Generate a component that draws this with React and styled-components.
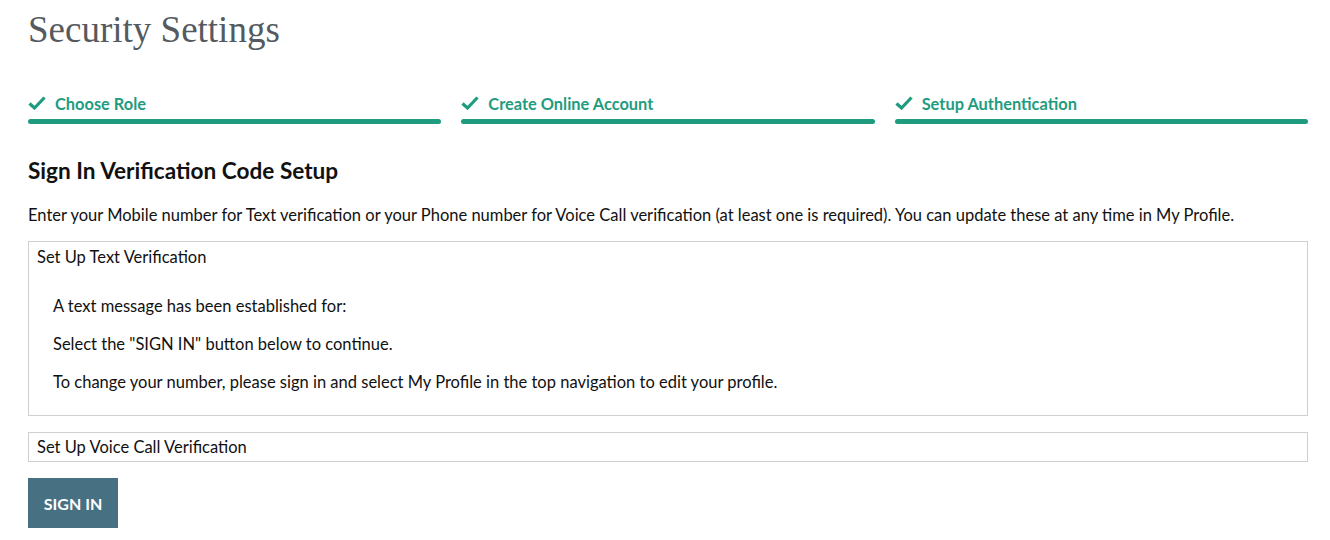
import styled, { createGlobalStyle } from "styled-components";

/* =======================
   Global
======================= */

const GlobalStyle = createGlobalStyle`
  body {
    margin: 0;
    background: #ffffff;
    font-family: "Lato", "Noto Sans", sans-serif;
    color: #111111;
  }
`;

const Page = styled.main`
  padding: 6px 22px 0 28px;
  display: flex;
  flex-direction: column;
`;

const Title = styled.h1`
  margin: 0;
  font-family: "Liberation Serif", "DejaVu Serif", serif;
  font-weight: 400;
  font-size: 37px;
  line-height: 48px;
  color: #545a60;
`;

/* =======================
   Stepper
======================= */

const Steps = styled.ol`
  list-style: none;
  margin: 39px 0 0;
  padding: 0;
  display: grid;
  grid-template-columns: repeat(3, 1fr);
  gap: 20px;
`;

const Step = styled.li`
  display: flex;
  flex-direction: column;
  gap: 6px;
`;

const StepLabel = styled.div`
  display: flex;
  align-items: center;
  gap: 9px;
  font-size: 16.4px;
  font-weight: 700;
  color: #1f9c7f;
  height: 20px;
`;

const StepBar = styled.div`
  height: 5px;
  border-radius: 3px;
  background: ${(p) => (p.$done ? "#1f9c7f" : "#d5d5d5")};
`;

const Check = () => (
  <svg width="18" height="14" viewBox="0 0 18 14" aria-hidden="true">
    <path d="M1.5 7.5 L6.5 12 L16.5 1.5" fill="none" stroke="#1f9c7f" strokeWidth="3.2" strokeLinejoin="miter" />
  </svg>
);

/* =======================
   Content
======================= */

const Heading = styled.h2`
  margin: 33px 0 0;
  font-size: 22.6px;
  font-weight: 700;
  line-height: 28px;
  color: #111111;
`;

const Intro = styled.p`
  margin: 20px 0 0;
  font-size: 16.5px;
  line-height: 20px;
`;

const Panel = styled.section`
  margin-top: ${(p) => p.$gap || 0}px;
  border: 1px solid #cfcfcf;
  padding: ${(p) => (p.$open ? "5px 8px 23px" : "4px 8px 4px")};
`;

const PanelTitle = styled.div`
  font-size: 16.5px;
  line-height: 20px;
`;

const PanelBody = styled.div`
  padding: 29px 0 0 16px;
  display: flex;
  flex-direction: column;
  gap: 18px;
`;

const Line = styled.p`
  margin: 0;
  font-size: 16.5px;
  line-height: 20px;
`;

const Button = styled.button`
  margin-top: 16px;
  align-self: flex-start;
  width: 90px;
  height: 50px;
  border: none;
  background: #477183;
  color: #ffffff;
  font-family: inherit;
  font-size: 16px;
  font-weight: 700;
  cursor: pointer;
`;

const steps = ["Choose Role", "Create Online Account", "Setup Authentication"];

export default function App() {
  return (
    <>
      <GlobalStyle />
      <Page>
        <Title>Security Settings</Title>

        <Steps>
          {steps.map((s) => (
            <Step key={s}>
              <StepLabel>
                <Check />
                {s}
              </StepLabel>
              <StepBar $done />
            </Step>
          ))}
        </Steps>

        <Heading>Sign In Verification Code Setup</Heading>
        <Intro>
          Enter your Mobile number for Text verification or your Phone number for Voice Call verification (at least one is required). You can update these at any time in My Profile.
        </Intro>

        <Panel $gap={16} $open>
          <PanelTitle>Set Up Text Verification</PanelTitle>
          <PanelBody>
            <Line>A text message has been established for:</Line>
            <Line>Select the "SIGN IN" button below to continue.</Line>
            <Line>To change your number, please sign in and select My Profile in the top navigation to edit your profile.</Line>
          </PanelBody>
        </Panel>

        <Panel $gap={16}>
          <PanelTitle>Set Up Voice Call Verification</PanelTitle>
        </Panel>

        <Button>SIGN IN</Button>
      </Page>
    </>
  );
}
